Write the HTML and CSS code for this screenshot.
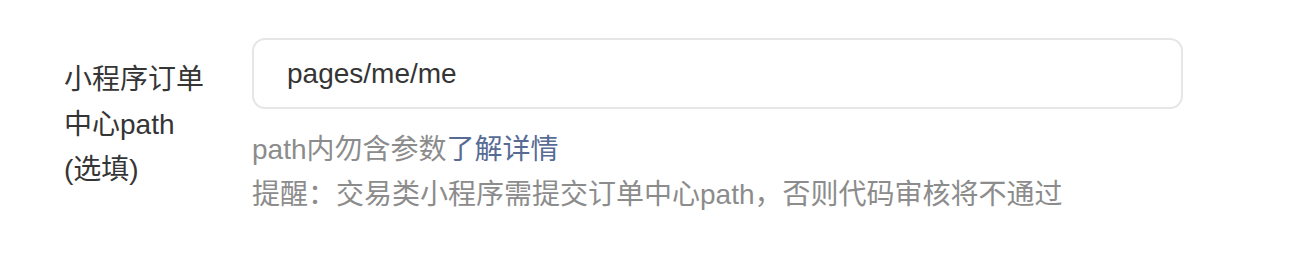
FILE: index.html
```html
<!DOCTYPE html>
<html lang="zh-CN">
<head>
<meta charset="utf-8">
<title>小程序订单中心path</title>
<link rel="stylesheet" href="styles.css">
</head>
<body>
<div class="form-row">
  <label class="form-label">小程序订单<br>中心path<br>(选填)</label>
  <div class="form-control">
    <div class="input-box"><span class="input-value">pages/me/me</span></div>
    <div class="helper">
      <p class="helper-line">path内勿含参数<a class="link" href="#">了解详情</a></p>
      <p class="helper-line">提醒：交易类小程序需提交订单中心path，否则代码审核将不通过</p>
    </div>
  </div>
</div>
</body>
</html>
```

FILE: styles.css
```css
html, body {
  margin: 0;
  padding: 0;
  background: #ffffff;
}

body {
  font-family: "Liberation Sans", "Noto Sans CJK SC", sans-serif;
  font-size: 28px;
  color: #353535;
}

.form-row {
  display: flex;
  padding: 38px 0 0 64px;
}

.form-label {
  width: 188px;
  flex: none;
  padding-top: 19px;
  line-height: 45px;
  color: #353535;
}

.form-control {
  display: flex;
  flex-direction: column;
}

.input-box {
  box-sizing: border-box;
  width: 931px;
  height: 71px;
  border: 2px solid #e6e6e6;
  border-radius: 13px;
  display: flex;
  align-items: center;
  padding-left: 33px;
}

.input-value {
  color: #353535;
  line-height: 1;
}

.helper {
  margin-top: 18px;
}

.helper-line {
  margin: 0;
  line-height: 45px;
  color: #8c8c8c;
}

.link {
  color: #576b95;
  text-decoration: none;
}
```
